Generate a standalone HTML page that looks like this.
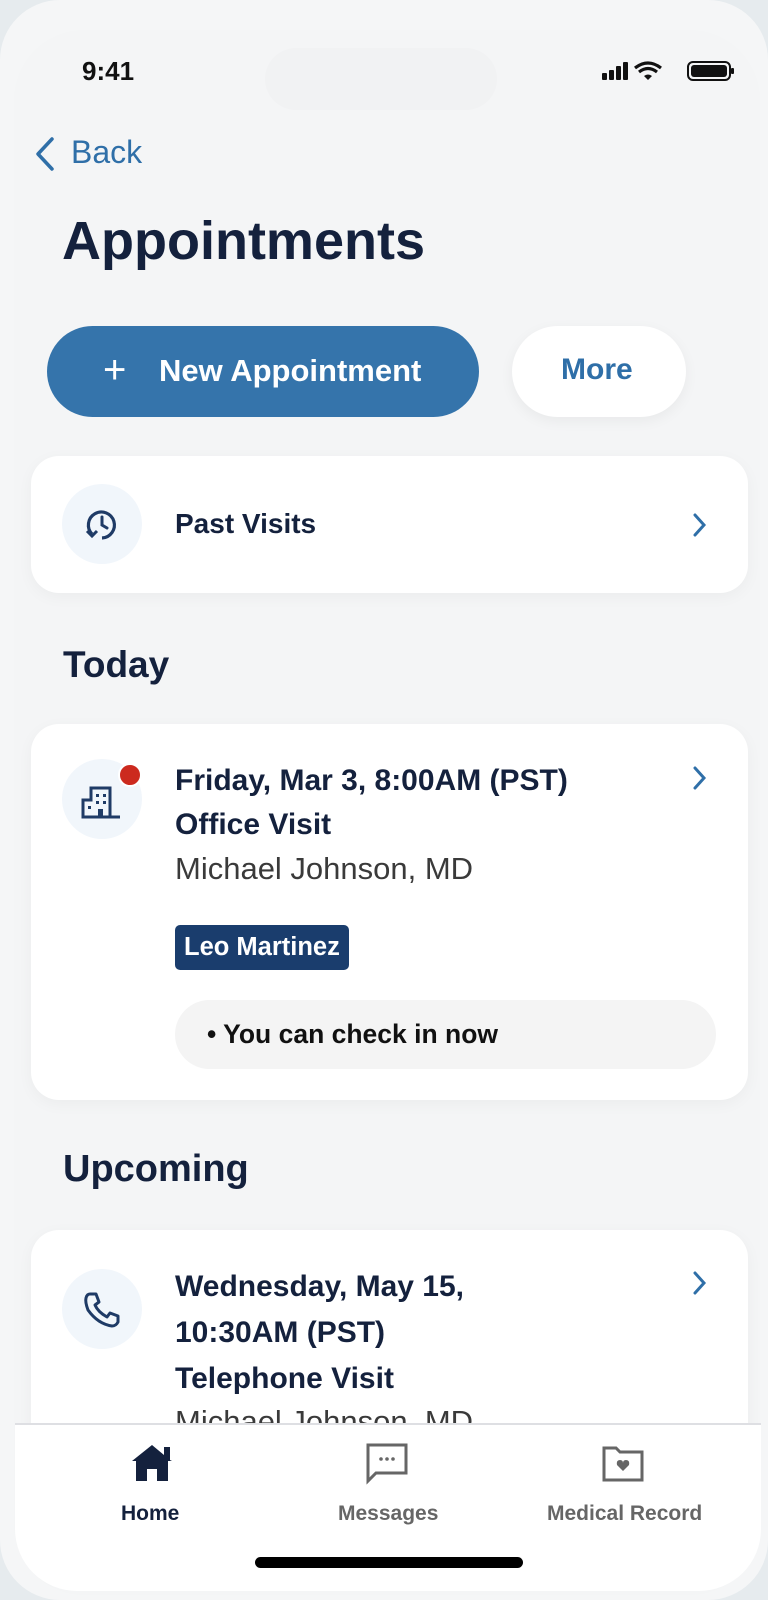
<!DOCTYPE html>
<html><head><meta charset="utf-8"><style>
*{margin:0;padding:0;box-sizing:border-box}
body{width:768px;height:1600px;background:#e6ebee;font-family:"Liberation Sans",sans-serif;position:relative;overflow:hidden;color:#14213d}
.screen{position:absolute;left:0;top:0;width:768px;height:1600px;background:#f5f6f7;border-radius:60px;}
.frame{position:absolute;left:14px;top:30px;width:746px;height:1565px;background:#f4f5f6;border-radius:70px}
.abs{position:absolute}
.card{position:absolute;left:31px;width:717px;background:#fff;border-radius:28px;box-shadow:0 4px 16px rgba(0,0,0,0.04)}
.circ{position:absolute;width:80px;height:80px;border-radius:50%;background:#f1f6fb}
.chev{position:absolute;color:#2f6fa8}
.b{font-weight:bold}
</style></head><body>
<div class="screen"></div>
<div class="frame"></div>
<div class="abs" style="left:265px;top:48px;width:232px;height:62px;border-radius:31px;background:#f1f2f3"></div>
<div class="abs b" style="left:82px;top:56px;font-size:26px;color:#111">9:41</div>
<svg class="abs" style="left:600px;top:60px" width="135" height="22" viewBox="0 0 135 22">
<rect x="2" y="13" width="5" height="7" rx="1" fill="#111"/><rect x="9" y="10" width="5" height="10" rx="1" fill="#111"/><rect x="16" y="6" width="5" height="14" rx="1" fill="#111"/><rect x="23" y="2" width="5" height="18" rx="1" fill="#111"/>
<path d="M35 8 Q48 -2 61 8" stroke="#111" stroke-width="3.2" fill="none"/><path d="M39 12 Q48 5 57 12" stroke="#111" stroke-width="3.2" fill="none"/><path d="M44 16 L48 20 L52 16 Q48 13 44 16Z" fill="#111"/>
<rect x="88" y="2" width="42" height="18" rx="5" fill="none" stroke="#111" stroke-width="2"/><rect x="91" y="5" width="36" height="12" rx="3" fill="#111"/><rect x="131" y="8" width="3" height="6" rx="1" fill="#111"/>
</svg>
<svg class="abs" style="left:32px;top:136px" width="24" height="36"><path d="M20 3 L6 18 L20 33" stroke="#2f6fa8" stroke-width="3.5" fill="none" stroke-linecap="round" stroke-linejoin="round"/></svg>
<div class="abs" style="left:71px;top:134px;font-size:32px;color:#2f6fa8">Back</div>
<div class="abs b" style="left:62px;top:210px;font-size:54px;color:#14213d">Appointments</div>
<div class="abs" style="left:47px;top:326px;width:432px;height:91px;border-radius:46px;background:#3574ab"></div>
<div class="abs" style="left:103px;top:347px;font-size:40px;color:#fff;line-height:46px">+</div>
<div class="abs b" style="left:159px;top:353px;font-size:31px;color:#fff">New Appointment</div>
<div class="abs" style="left:512px;top:326px;width:174px;height:91px;border-radius:46px;background:#fff;box-shadow:0 4px 14px rgba(0,0,0,0.05)"></div>
<div class="abs b" style="left:561px;top:353px;font-size:30px;color:#2f6fa8">More</div>

<div class="card" style="top:456px;height:137px"></div>
<div class="circ" style="left:62px;top:484px"></div>
<svg class="abs" style="left:82px;top:504px" width="40" height="40" viewBox="0 0 40 40"><path d="M10 30 A13 13 0 1 1 20 34" stroke="#1f3b66" stroke-width="3.2" fill="none"/><path d="M5 27 L10 32 L15 27" stroke="#1f3b66" stroke-width="3" fill="none"/><path d="M20 13 V21 L25 24" stroke="#1f3b66" stroke-width="3" fill="none" stroke-linecap="round"/></svg>
<div class="abs b" style="left:175px;top:508px;font-size:28px">Past Visits</div>
<svg class="chev" style="left:692px;top:512px" width="16" height="26"><path d="M3 3 L12 13 L3 23" stroke="#2f6fa8" stroke-width="3" fill="none" stroke-linecap="round"/></svg>

<div class="abs b" style="left:63px;top:644px;font-size:37px">Today</div>
<div class="card" style="top:724px;height:376px"></div>
<div class="circ" style="left:62px;top:759px"></div>
<svg class="abs" style="left:80px;top:784px" width="44" height="36" viewBox="0 0 44 36"><path d="M3 33 V16 H11 V4 H30 V33 Z M3 33 H40" stroke="#1f3b66" stroke-width="3" fill="none"/><rect x="16" y="10" width="3" height="3" fill="#1f3b66"/><rect x="23" y="10" width="3" height="3" fill="#1f3b66"/><rect x="16" y="17" width="3" height="3" fill="#1f3b66"/><rect x="23" y="17" width="3" height="3" fill="#1f3b66"/><rect x="8" y="22" width="3" height="3" fill="#1f3b66"/><rect x="18" y="25" width="5" height="8" fill="#1f3b66"/></svg>
<div class="abs" style="left:118px;top:763px;width:24px;height:24px;border-radius:50%;background:#cc2a1e;border:2px solid #fff"></div>
<div class="abs b" style="left:175px;top:759px;font-size:30px;line-height:44px">Friday, Mar 3, 8:00AM (PST)<br>Office Visit</div>
<div class="abs" style="left:175px;top:851px;font-size:31px;color:#3a3a3a">Michael Johnson, MD</div>
<svg class="chev" style="left:692px;top:765px" width="16" height="26"><path d="M3 3 L12 13 L3 23" stroke="#2f6fa8" stroke-width="3" fill="none" stroke-linecap="round"/></svg>
<div class="abs b" style="left:175px;top:925px;height:45px;padding:0 9px;background:#1a3d6d;color:#fff;border-radius:5px;font-size:25.5px;line-height:45px">Leo Martinez</div>
<div class="abs b" style="left:175px;top:1000px;width:541px;height:69px;border-radius:35px;background:#f4f4f4;font-size:26.5px;line-height:69px;padding-left:32px;color:#111">• You can check in now</div>

<div class="abs b" style="left:63px;top:1148px;font-size:38px">Upcoming</div>
<div class="card" style="top:1230px;height:300px"></div>
<div class="circ" style="left:62px;top:1269px"></div>
<svg class="abs" style="left:82px;top:1290px" width="40" height="40" viewBox="0 0 40 40"><path d="M8 4 L14 4 L17 12 L13 15 Q16 22 25 27 L28 23 L36 26 L36 32 Q34 36 30 36 Q16 34 6 20 Q3 12 4 8 Q5 4 8 4Z" stroke="#1f3b66" stroke-width="3" fill="none" stroke-linejoin="round"/></svg>
<div class="abs b" style="left:175px;top:1264px;font-size:30px;line-height:46px">Wednesday, May 15,<br>10:30AM (PST)<br>Telephone Visit</div>
<div class="abs" style="left:175px;top:1404px;font-size:31px;color:#3a3a3a">Michael Johnson, MD</div>
<svg class="chev" style="left:692px;top:1270px" width="16" height="26"><path d="M3 3 L12 13 L3 23" stroke="#2f6fa8" stroke-width="3" fill="none" stroke-linecap="round"/></svg>

<div class="abs" style="left:15px;top:1423px;width:746px;height:168px;background:#fff;border-top:2px solid #dedfe3;border-radius:0 0 62px 62px"></div>
<svg class="abs" style="left:130px;top:1443px" width="44" height="40" viewBox="0 0 44 40"><path d="M2 18 L22 2 L34 12 V4 H40 V17 L42 18 L38 18 V38 H27 V26 H17 V38 H6 V18 Z" fill="#14213d"/></svg>
<div class="abs b" style="left:121px;top:1502px;font-size:21px;color:#14213d">Home</div>
<svg class="abs" style="left:366px;top:1443px" width="44" height="44" viewBox="0 0 44 44"><path d="M2 2 H40 V30 H10 L2 38 Z" stroke="#666" stroke-width="3" fill="none"/><circle cx="15" cy="16" r="1.8" fill="#666"/><circle cx="21" cy="16" r="1.8" fill="#666"/><circle cx="27" cy="16" r="1.8" fill="#666"/></svg>
<div class="abs b" style="left:338px;top:1502px;font-size:21px;color:#666">Messages</div>
<svg class="abs" style="left:602px;top:1446px" width="44" height="38" viewBox="0 0 44 38"><path d="M2 2 H14 L18 6 H40 V34 H2 Z" stroke="#666" stroke-width="3" fill="none"/><path d="M21 25 L15 19 Q14 14 18 14 Q21 14 21 17 Q21 14 24 14 Q28 14 27 19 Z" fill="#666"/></svg>
<div class="abs b" style="left:547px;top:1502px;font-size:21px;color:#666">Medical Record</div>
<div class="abs" style="left:255px;top:1557px;width:268px;height:11px;border-radius:6px;background:#000"></div>
</body></html>
